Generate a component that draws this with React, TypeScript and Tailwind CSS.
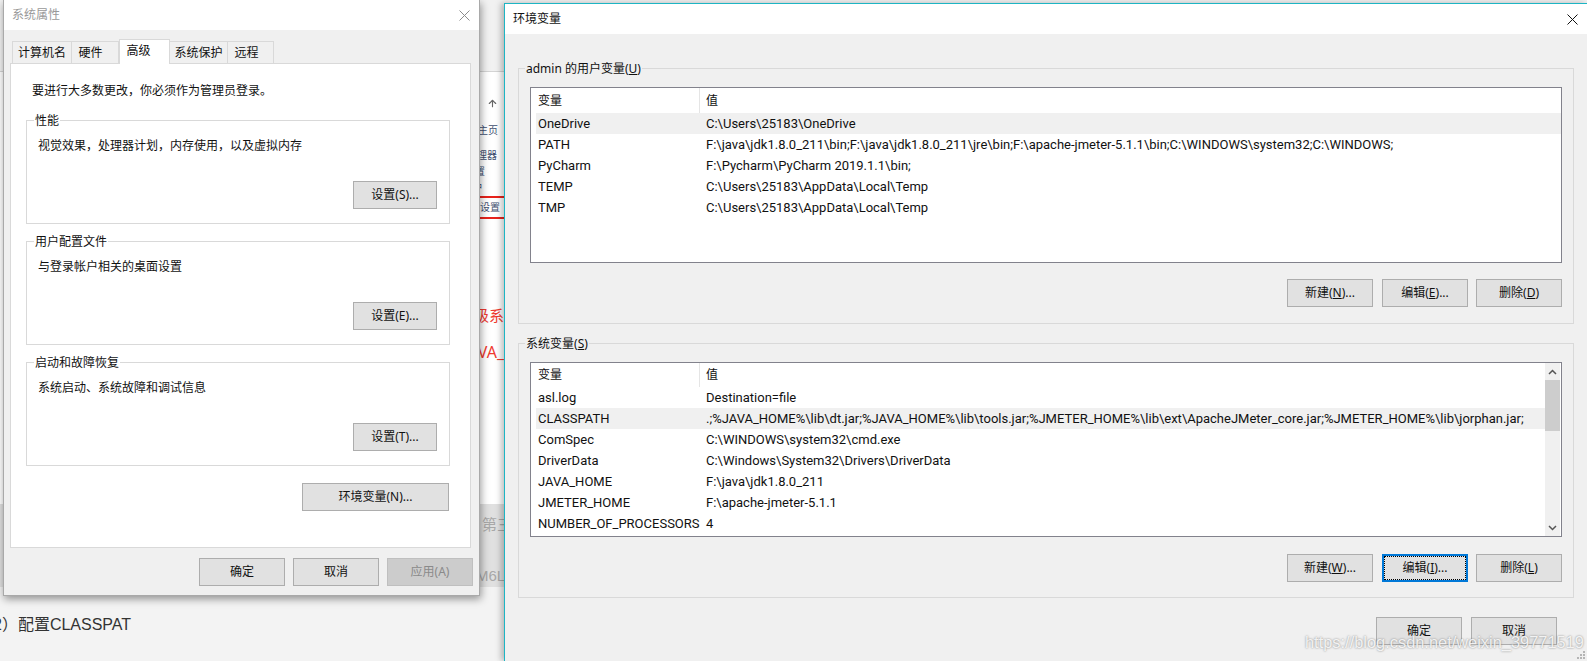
import React from 'react';
import { ArrowUp } from 'lucide-react';

const uiFont = 'font-["Noto_Sans","Noto_Sans_CJK_SC",sans-serif]';

const userVars = [
  ['OneDrive', 'C:\\Users\\25183\\OneDrive'],
  ['PATH', 'F:\\java\\jdk1.8.0_211\\bin;F:\\java\\jdk1.8.0_211\\jre\\bin;F:\\apache-jmeter-5.1.1\\bin;C:\\WINDOWS\\system32;C:\\WINDOWS;'],
  ['PyCharm', 'F:\\Pycharm\\PyCharm 2019.1.1\\bin;'],
  ['TEMP', 'C:\\Users\\25183\\AppData\\Local\\Temp'],
  ['TMP', 'C:\\Users\\25183\\AppData\\Local\\Temp'],
];

const sysVars = [
  ['asl.log', 'Destination=file'],
  ['CLASSPATH', '.;%JAVA_HOME%\\lib\\dt.jar;%JAVA_HOME%\\lib\\tools.jar;%JMETER_HOME%\\lib\\ext\\ApacheJMeter_core.jar;%JMETER_HOME%\\lib\\jorphan.jar;'],
  ['ComSpec', 'C:\\WINDOWS\\system32\\cmd.exe'],
  ['DriverData', 'C:\\Windows\\System32\\Drivers\\DriverData'],
  ['JAVA_HOME', 'F:\\java\\jdk1.8.0_211'],
  ['JMETER_HOME', 'F:\\apache-jmeter-5.1.1'],
  ['NUMBER_OF_PROCESSORS', '4'],
];

const CloseIcon = ({ color }: { color: string }) => (
  <svg width="11" height="11" viewBox="0 0 11 11" fill="none" stroke={color} strokeWidth="1">
    <path d="M0.5 0.5L10.5 10.5M10.5 0.5L0.5 10.5" />
  </svg>
);

const Btn = ({ label, mn, tail, w = 'w-[86px]', focused, disabled }: { label: string; mn?: string; tail?: string; w?: string; focused?: boolean; disabled?: boolean }) => (
  <div
    className={`${w} h-[28px] flex items-center justify-center text-[12px] border ${
      focused
        ? 'border-2 border-[#0078d7] bg-[#e1e1e1] text-[#111]'
        : disabled
          ? 'border-[#bfbfbf] bg-[#cccccc] text-[#8a8a8a]'
          : 'border-[#adadad] bg-[#e1e1e1] text-[#111]'
    }`}
  >
    {focused ? (
      <span className="w-full h-full flex items-center justify-center border border-dotted border-black">
        {label}
        {mn && <span>(<span className="underline">{mn}</span>)</span>}
        {tail}
      </span>
    ) : (
      <>
        {label}
        {mn && <span>(<span className="underline">{mn}</span>)</span>}
        {tail}
      </>
    )}
  </div>
);

const Tab = ({ label, w, active, pad = '' }: { label: string; w: string; active?: boolean; pad?: string }) => (
  <div
    className={`${w} ${pad} flex items-center justify-center text-[12px] text-[#111] border-t border-x border-[#d9d9d9] ${
      active ? 'h-[25px] bg-white pb-[3px] -mb-px z-10' : 'h-[22px] bg-[#f0f0f0] -ml-px pt-px'
    }`}
  >
    {label}
  </div>
);

const SettingsGroup = ({ title, text, button }: { title: string; text: string; button: string }) => (
  <div className="relative h-[104px] border border-[#d9d9d9] flex flex-col justify-between pt-[15px] pb-[14px] pl-[11px] pr-[12px]">
    <span className="absolute -top-[10px] left-[7px] bg-white px-px text-[12px] leading-[20px] text-[#111]">{title}</span>
    <p className="text-[12px] leading-[20px] text-[#111]">{text}</p>
    <div className="self-end">
      <Btn label={button} w="w-[84px]" />
    </div>
  </div>
);

const VarList = ({ rows, active, header, height, scroll }: { rows: string[][]; active: number; header: string; height: string; scroll?: boolean }) => (
  <div className={`${height} border border-[#82828c] bg-white flex`}>
    <div className="flex-1 min-w-0">
      <div className={`${header} flex items-center text-[12px] text-[#111]`}>
        <div className="w-[169px] h-full flex items-center pl-[7px] border-r border-[#e5e5e5]">变量</div>
        <div className="pl-[6px]">值</div>
      </div>
      {rows.map((r, i) => (
        <div key={r[0]} className={`ml-[5px] h-[21px] flex items-center text-[13px] text-[#111] whitespace-nowrap font-['Roboto',sans-serif] ${i === active ? 'bg-[#f0f0f0]' : ''}`}>
          <div className="w-[170px] pl-[2px]">{r[0]}</div>
          <div>{r[1]}</div>
        </div>
      ))}
    </div>
    {scroll && (
      <div className="w-[15px] mr-px bg-[#f0f0f0] flex flex-col items-center justify-between">
        <div className="h-[17px] w-full flex items-center justify-center">
          <svg width="9" height="6" viewBox="0 0 9 6" fill="none" stroke="#555" strokeWidth="1.5"><path d="M1 5L4.5 1.5L8 5" /></svg>
        </div>
        <div className="h-[51px] w-full bg-[#cdcdcd]" />
        <div className="flex-1" />
        <div className="h-[17px] w-full flex items-center justify-center">
          <svg width="9" height="6" viewBox="0 0 9 6" fill="none" stroke="#555" strokeWidth="1.5"><path d="M1 1L4.5 4.5L8 1" /></svg>
        </div>
      </div>
    )}
  </div>
);

const Fragment = ({ text, end, y, cls }: { text: string; end: string; y: string; cls: string }) => (
  <div className={`${y} ${end} h-[16px] flex justify-end whitespace-nowrap leading-[16px] ${cls}`}>{text}</div>
);

// page that shows behind the two windows
const Backdrop = () => (
  <div className="w-[1587px] h-[661px] bg-[#f3f3f3] flex flex-col overflow-hidden">
    <div className="h-[72px] bg-[#f1f1f1] border-b border-[#d4d4d4]" />
    <div className="h-[432px] bg-white w-full">
      <div className="ml-[480px] w-[24px] overflow-hidden flex flex-col">
        <div className="mt-[24px] h-[14px] flex items-center pl-[7px]">
          <ArrowUp size={11} color="#666" strokeWidth={2.5} />
        </div>
        <Fragment text="控制面板主页" end="pr-[6px]" y="mt-[12px]" cls="text-[10px] text-[#3f4f70] justify-end" />
        <Fragment text="设备管理器" end="pr-[7px]" y="mt-[9px]" cls="text-[10px] text-[#3f4f70]" />
        <Fragment text="远程设置" end="pr-[19px]" y="mt-0" cls="text-[10px] text-[#3f4f70]" />
        <Fragment text="系统保护" end="pr-[22px]" y="mt-0" cls="text-[10px] text-[#3f4f70]" />
        <div className="mt-[1px] h-[23px] border-y-2 border-[#e8231c] flex items-center justify-end pr-[4px] whitespace-nowrap text-[10px] text-[#3f4f70]">高级系统设置</div>
        <div className="mt-[86px] h-[20px] flex items-center justify-end whitespace-nowrap text-[15px] text-[#f03a30]">高级系</div>
        <div className="mt-[17px] h-[20px] flex items-center justify-end whitespace-nowrap text-[16px] text-[#f03a30]">JAVA_</div>
      </div>
    </div>
    <div className="h-[83px] bg-[#e0e0e0] overflow-hidden pl-[482px] text-[15px] text-[#a8a8a8]">
      <div className="mt-[10px] h-[20px] leading-[20px] whitespace-nowrap">第三</div>
      <div className="mt-[32px] h-[20px] leading-[20px] -ml-[6px] whitespace-nowrap font-['Liberation_Sans',sans-serif]">M6L</div>
    </div>
    <div className="mt-[28px] -ml-[7px] h-[20px] leading-[20px] text-[16px] text-[#333] font-['Liberation_Sans','Noto_Sans_CJK_SC',sans-serif] whitespace-nowrap">
      2）配置CLASSPAT
    </div>
  </div>
);

const SystemProps = () => (
  <div className="absolute left-[3px] top-0 w-[477px] h-[596px] bg-[#f0f0f0] border-x border-b border-[#a9a9a9] shadow-[1px_3px_8px_rgba(0,0,0,0.4)] flex flex-col">
    <div className="h-[30px] bg-white flex items-center justify-between pl-[8px] pr-[9px] text-[12px] text-[#999]">
      <span>系统属性</span>
      <CloseIcon color="#8c8c8c" />
    </div>
    <div className="mt-[8px] ml-[9px] h-[25px] flex items-end">
      <Tab label="计算机名" w="w-[60px]" />
      <Tab label="硬件" w="w-[48px]" pad="pr-[9px]" />
      <Tab label="高级" w="w-[51px]" pad="pr-[12px]" active />
      <Tab label="系统保护" w="w-[59px]" />
      <Tab label="远程" w="w-[47px]" pad="pr-[8px]" />
    </div>
    <div className="ml-[6px] w-[461px] h-[485px] bg-white border border-[#d9d9d9] pl-[15px] pr-[20px] flex flex-col">
      <p className="mt-[17px] h-[20px] pl-[6px] leading-[20px] text-[12px] text-[#111]">要进行大多数更改，你必须作为管理员登录。</p>
      <div className="mt-[19px] flex flex-col gap-[17px]">
        <SettingsGroup title="性能" text="视觉效果，处理器计划，内存使用，以及虚拟内存" button="设置(S)..." />
        <SettingsGroup title="用户配置文件" text="与登录帐户相关的桌面设置" button="设置(E)..." />
        <SettingsGroup title="启动和故障恢复" text="系统启动、系统故障和调试信息" button="设置(T)..." />
      </div>
      <div className="mt-[17px] mr-px self-end">
        <Btn label="环境变量(N)..." w="w-[147px]" />
      </div>
    </div>
    <div className="mt-[10px] pr-[6px] flex justify-end gap-[8px]">
      <Btn label="确定" />
      <Btn label="取消" />
      <Btn label="应用(A)" disabled />
    </div>
  </div>
);

const EnvGroup = ({ title, mn, children }: { title: string; mn: string; children: React.ReactNode }) => (
  <div className="relative border border-[#d9d9d9] px-[11px]">
    <span className="absolute -top-[10px] left-[6px] bg-[#f0f0f0] px-px text-[12px] leading-[20px] text-[#111]">
      {title}(<span className="underline">{mn}</span>)
    </span>
    {children}
  </div>
);

const ButtonRow = ({ children }: { children: React.ReactNode }) => (
  <div className="flex justify-end gap-[8px]">{children}</div>
);

const EnvVars = () => (
  <div className="absolute left-[504px] top-[3px] right-0 bottom-0 bg-[#f0f0f0] border-t border-l border-[#1db5c4] shadow-[-3px_0_6px_rgba(0,0,0,0.25)] flex flex-col">
    <div className="h-[30px] bg-white flex items-center justify-between pl-[8px] pr-[9px] text-[12px] text-[#111]">
      <span>环境变量</span>
      <CloseIcon color="#111" />
    </div>
    <div className="ml-[13px] w-[1056px] mt-[34px] flex flex-col gap-[19px]">
      <EnvGroup title="admin 的用户变量" mn="U">
        <div className="pt-[18px] pb-[16px]">
          <VarList rows={userVars} active={0} header="h-[25px]" height="h-[176px]" />
          <div className="mt-[16px]">
            <ButtonRow>
              <div className="mr-px"><Btn label="新建" mn="N" tail="..." /></div>
              <Btn label="编辑" mn="E" tail="..." />
              <Btn label="删除" mn="D" />
            </ButtonRow>
          </div>
        </div>
      </EnvGroup>
      <EnvGroup title="系统变量" mn="S">
        <div className="pt-[18px] pb-[15px]">
          <VarList rows={sysVars} active={1} header="h-[24px]" height="h-[175px]" scroll />
          <div className="mt-[17px]">
            <ButtonRow>
              <div className="mr-px"><Btn label="新建" mn="W" tail="..." /></div>
              <Btn label="编辑" mn="I" tail="..." focused />
              <Btn label="删除" mn="L" />
            </ButtonRow>
          </div>
        </div>
      </EnvGroup>
    </div>
    <div className="mt-[19px] pr-[30px] flex justify-end gap-[9px]">
      <Btn label="确定" />
      <Btn label="取消" />
    </div>
  </div>
);

export default function App() {
  return (
    <div className={`relative w-[1587px] h-[661px] overflow-hidden ${uiFont}`}>
      <Backdrop />
      <SystemProps />
      <EnvVars />
      <div className="absolute left-[1305px] top-[631px] h-[22px] leading-[22px] text-[16.4px] text-white/85 [text-shadow:0_0_2px_rgba(90,90,90,0.8)] font-['Liberation_Sans',sans-serif] whitespace-nowrap">
        https://blog.csdn.net/weixin_39771519
      </div>
      <div className="absolute right-[1px] bottom-[1px]">
        <svg width="10" height="10" viewBox="0 0 10 10" fill="#b5b5b5">
          <rect x="7" y="1" width="2" height="2" />
          <rect x="4" y="4" width="2" height="2" />
          <rect x="7" y="4" width="2" height="2" />
          <rect x="1" y="7" width="2" height="2" />
          <rect x="4" y="7" width="2" height="2" />
          <rect x="7" y="7" width="2" height="2" />
        </svg>
      </div>
    </div>
  );
}
